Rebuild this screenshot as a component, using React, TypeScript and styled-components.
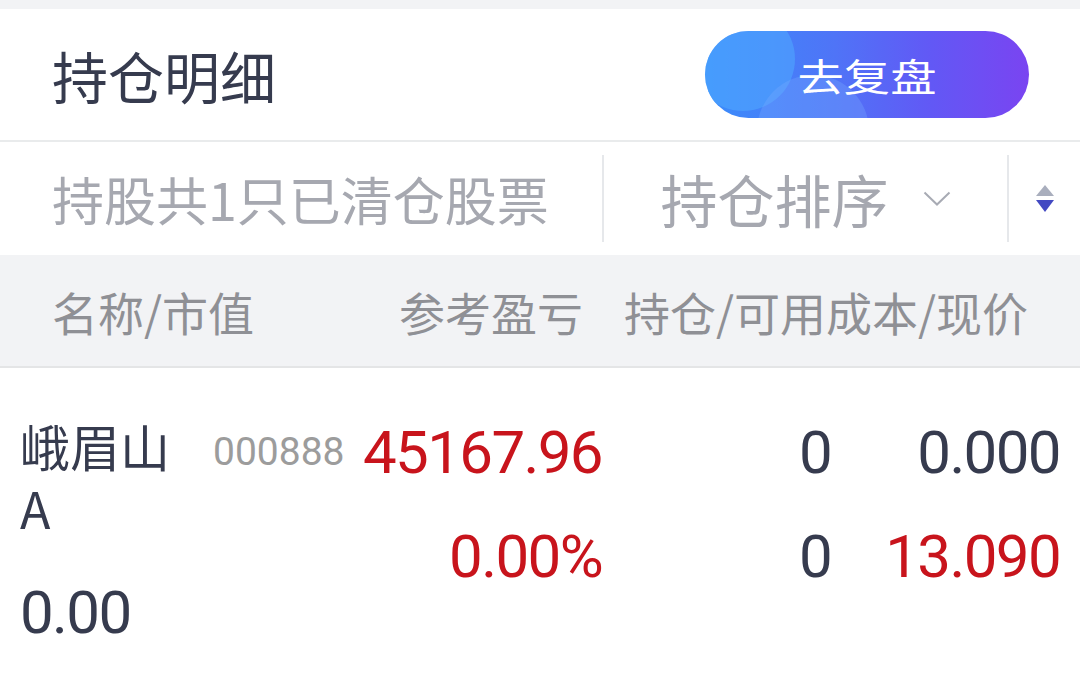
import styled, { createGlobalStyle } from "styled-components";

const GlobalStyle = createGlobalStyle`
  html, body {
    margin: 0;
    padding: 0;
    background: #ffffff;
  }
  body {
    font-family: "Noto Sans CJK SC", "Noto Sans", sans-serif;
  }
`;

const Page = styled.div`
  width: 1080px;
  height: 681px;
  overflow: hidden;
  background: #ffffff;
`;

const TopStrip = styled.div`
  height: 9px;
  background: #f2f3f5;
`;

const Header = styled.header`
  height: 131px;
  padding: 0 51px 0 52px;
  display: flex;
  align-items: center;
  justify-content: space-between;
  border-bottom: 2px solid #e9ebec;
`;

const Title = styled.h1`
  margin: 0;
  font-size: 56px;
  font-weight: 400;
  color: #363b4e;
  line-height: 1;
`;

const ReviewButton = styled.button`
  position: relative;
  overflow: hidden;
  width: 324px;
  height: 87px;
  border: none;
  border-radius: 44px;
  padding: 0;
  background: linear-gradient(90deg, #3a8dfb 0%, #4f74f7 40%, #6258f5 70%, #7a44f1 100%);
  display: flex;
  align-items: center;
  justify-content: center;
  cursor: pointer;

  &::before {
    content: "";
    position: absolute;
    left: -14px;
    top: -24px;
    width: 104px;
    height: 104px;
    border-radius: 50%;
    background: rgba(80, 170, 255, 0.55);
  }

  &::after {
    content: "";
    position: absolute;
    left: 52px;
    top: 44px;
    width: 112px;
    height: 112px;
    border-radius: 50%;
    background: rgba(120, 170, 255, 0.32);
  }
`;

const ButtonLabel = styled.span`
  position: relative;
  z-index: 1;
  color: #ffffff;
  font-family: "Noto Sans CJK SC", sans-serif;
  font-size: 38px;
  line-height: 1;
  transform: scaleX(1.22);
`;

const FilterBar = styled.div`
  height: 113px;
  display: flex;
  align-items: center;
`;

const FilterCell = styled.div<{ $width: number; $align?: string; $divider?: boolean }>`
  width: ${(p) => p.$width}px;
  height: 87px;
  display: flex;
  align-items: center;
  justify-content: ${(p) => p.$align || "center"};
  box-sizing: border-box;
  border-right: ${(p) => (p.$divider ? "2px solid #e6e8eb" : "none")};
`;

const FilterText = styled.span<{ $size: number; $indent?: number }>`
  font-size: ${(p) => p.$size}px;
  padding-left: ${(p) => p.$indent || 0}px;
  color: #a6a8b0;
  line-height: 1;
`;

const SortLabel = styled.div`
  display: flex;
  align-items: center;
  gap: 34px;
`;

const TableHead = styled.div`
  height: 111px;
  background: #f2f3f5;
  border-bottom: 2px solid #e4e5e6;
  display: flex;
  align-items: center;
  padding: 0 52px;
`;

const HeadCell = styled.span<{ $grow?: boolean; $gap?: number }>`
  flex: ${(p) => (p.$grow ? 1 : "none")};
  margin-right: ${(p) => p.$gap || 0}px;
  font-size: 46px;
  color: #8f9095;
  line-height: 1;
  white-space: nowrap;
`;

const Row = styled.div`
  display: grid;
  grid-template-columns: 193px 137px 252px 229px 229px;
  padding: 46px 20px 0 20px;
  align-items: start;
`;

const NameCell = styled.div`
  display: flex;
  flex-direction: column;
`;

const StockName = styled.div`
  width: 156px;
  font-size: 50px;
  line-height: 62px;
  color: #363b4e;
`;

const Code = styled.div`
  font-family: Roboto, "Noto Sans", sans-serif;
  font-size: 39px;
  line-height: 60px;
  color: #9c9c9c;
  padding-top: 8px;
`;

const ValueStack = styled.div`
  display: flex;
  flex-direction: column;
  align-items: flex-end;
  gap: 34px;
  padding-top: 4px;
`;

const Num = styled.span<{ $red?: boolean }>`
  font-family: Roboto, "Noto Sans", sans-serif;
  font-size: 60px;
  line-height: 70px;
  letter-spacing: -1.6px;
  color: ${(p) => (p.$red ? "#c8141c" : "#363b4e")};
  white-space: nowrap;
`;

const MarketValue = styled(Num)`
  margin-top: 40px;
`;

function Chevron() {
  return (
    <svg width="28" height="16" viewBox="0 0 28 16">
      <polyline points="1.5,1.5 14,13.5 26.5,1.5" fill="none" stroke="#a8abb4" strokeWidth="2" />
    </svg>
  );
}

function SortIcon() {
  return (
    <svg width="18" height="28" viewBox="0 0 18 28">
      <polygon points="9,0 18,11 0,11" fill="#a9aebd" />
      <polygon points="0,15 18,15 9,27" fill="#4349c2" />
    </svg>
  );
}

export default function App() {
  return (
    <>
      <GlobalStyle />
      <Page>
        <TopStrip />
        <Header>
          <Title>持仓明细</Title>
          <ReviewButton>
            <ButtonLabel>去复盘</ButtonLabel>
          </ReviewButton>
        </Header>
        <FilterBar>
          <FilterCell $width={604} $align="flex-start" $divider>
            <FilterText $size={52} $indent={52}>
              持股共1只已清仓股票
            </FilterText>
          </FilterCell>
          <FilterCell $width={405} $divider>
            <SortLabel>
              <FilterText $size={57}>持仓排序</FilterText>
              <Chevron />
            </SortLabel>
          </FilterCell>
          <FilterCell $width={71}>
            <SortIcon />
          </FilterCell>
        </FilterBar>
        <TableHead>
          <HeadCell $grow>名称/市值</HeadCell>
          <HeadCell $gap={41}>参考盈亏</HeadCell>
          <HeadCell>持仓/可用成本/现价</HeadCell>
        </TableHead>
        <Row>
          <NameCell>
            <StockName>峨眉山A</StockName>
            <MarketValue>0.00</MarketValue>
          </NameCell>
          <Code>000888</Code>
          <ValueStack>
            <Num $red>45167.96</Num>
            <Num $red>0.00%</Num>
          </ValueStack>
          <ValueStack>
            <Num>0</Num>
            <Num>0</Num>
          </ValueStack>
          <ValueStack>
            <Num>0.000</Num>
            <Num $red>13.090</Num>
          </ValueStack>
        </Row>
      </Page>
    </>
  );
}
